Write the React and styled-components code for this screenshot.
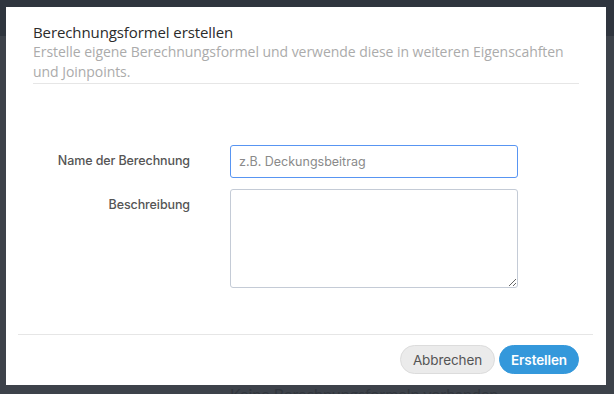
import React from "react";
import styled, { createGlobalStyle } from "styled-components";

const GlobalStyle = createGlobalStyle`
  html, body {
    margin: 0;
    padding: 0;
    background: #3d424a;
  }
  * { box-sizing: border-box; }
`;

const Page = styled.div`
  width: 614px;
  height: 394px;
  position: relative;
  overflow: hidden;
  background: #3d424a;
  display: flex;
  flex-direction: column;
`;

const PageHeader = styled.div`
  height: 36px;
  background: #2f353e;
`;

const PageBody = styled.div`
  flex: 1;
  display: flex;
  align-items: flex-end;
  padding-left: 230px;
`;

const EmptyText = styled.div`
  font-family: "Lato", "Liberation Sans", sans-serif;
  font-size: 16px;
  color: #31363d;
  line-height: 18px;
  margin-bottom: -9px;
`;

const Overlay = styled.div`
  position: absolute;
  inset: 0;
  display: flex;
  justify-content: flex-start;
  padding: 7px 0 0 6px;
`;

const Modal = styled.div`
  width: 600px;
  height: 378px;
  background: #fff;
  display: flex;
  flex-direction: column;
`;

const Header = styled.div`
  margin: 0 27px;
  padding: 15px 0 2px;
  border-bottom: 1px solid #e6e6e6;
  font-family: "Open Sans", "Liberation Sans", sans-serif;
`;

const Title = styled.h4`
  margin: 0;
  font-size: 15px;
  font-weight: 400;
  line-height: 20px;
  color: #2b2b2b;
  letter-spacing: -0.1px;
`;

const Subtitle = styled.p`
  margin: 0;
  font-size: 14px;
  line-height: 19.5px;
  color: #ababab;
  letter-spacing: -0.05px;
`;

const Body = styled.div`
  flex: 1;
  padding-top: 61px;
`;

const Form = styled.div`
  display: grid;
  grid-template-columns: 184px 288px;
  column-gap: 40px;
  row-gap: 11px;
`;

const Label = styled.label`
  font-family: "Inter", "Noto Sans", sans-serif;
  font-size: 12.5px;
  font-weight: 500;
  color: #555;
  text-align: right;
  line-height: 18px;
  letter-spacing: -0.1px;
  padding-top: ${(p) => p.$top}px;
`;

const Input = styled.input`
  height: 33px;
  border: 1px solid #5895f2;
  border-radius: 3px;
  padding: 0 8px;
  font-family: "Inter", "Noto Sans", sans-serif;
  font-size: 12.5px;
  color: #333;
  outline: none;
  &::placeholder { color: #8a8a8a; }
`;

const TextArea = styled.textarea`
  height: 99px;
  border: 1px solid #c4cbd6;
  border-radius: 3px;
  padding: 6px 8px;
  font-family: "Inter", "Noto Sans", sans-serif;
  font-size: 12.5px;
  outline: none;
  resize: vertical;
`;

const Footer = styled.div`
  margin: 0 13px 0 12px;
  border-top: 1px solid #e6e6e6;
  padding: 10px 14px 11px 0;
  display: flex;
  justify-content: flex-end;
  gap: 4px;
`;

const Button = styled.button`
  height: 29px;
  padding: 0 10px;
  border-radius: 15px;
  border: 1px solid ${(p) => (p.$primary ? "#3498db" : "#dcdcdc")};
  background: ${(p) => (p.$primary ? "#3498db" : "#ebebeb")};
  color: ${(p) => (p.$primary ? "#fff" : "#555")};
  font-family: "Inter", "Noto Sans", sans-serif;
  font-size: 13.5px;
  font-weight: ${(p) => (p.$primary ? 600 : 400)};
  letter-spacing: -0.1px;
  cursor: pointer;
  min-width: ${(p) => p.$w}px;
`;

export default function App() {
  return (
    <>
      <GlobalStyle />
      <Page>
        <PageHeader />
        <PageBody>
          <EmptyText>Keine Berechnungsformeln vorhanden.</EmptyText>
        </PageBody>
        <Overlay>
          <Modal>
            <Header>
              <Title>Berechnungsformel erstellen</Title>
              <Subtitle>
                Erstelle eigene Berechnungsformel und verwende diese in weiteren Eigenscahften und Joinpoints.
              </Subtitle>
            </Header>
            <Body>
              <Form>
                <Label $top={7}>Name der Berechnung</Label>
                <Input placeholder="z.B. Deckungsbeitrag" autoFocus />
                <Label $top={7}>Beschreibung</Label>
                <TextArea />
              </Form>
            </Body>
            <Footer>
              <Button $w={95}>Abbrechen</Button>
              <Button $primary $w={80}>Erstellen</Button>
            </Footer>
          </Modal>
        </Overlay>
      </Page>
    </>
  );
}
